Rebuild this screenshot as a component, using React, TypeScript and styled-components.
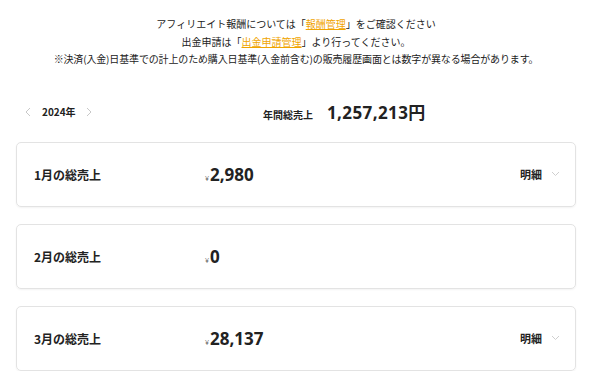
import React from 'react';
import styled, { createGlobalStyle } from 'styled-components';

const GlobalStyle = createGlobalStyle`
  html, body {
    margin: 0;
    padding: 0;
    background: #ffffff;
  }
  body {
    font-family: "Open Sans", "Noto Sans CJK JP", sans-serif;
    color: #222222;
  }
`;

const Page = styled.div`
  width: 592px;
  padding: 15px 16px 0;
  box-sizing: border-box;
`;

const Notice = styled.div`
  text-align: center;
  font-size: 10px;
  line-height: 17.5px;
  color: #222;
  font-family: "Noto Sans CJK JP", sans-serif;
`;

const NoticeLink = styled.span`
  color: #f0a400;
  text-decoration: underline;
`;

const Small = styled.div`
  font-size: 10px;
  letter-spacing: -0.15px;
`;

const YearBar = styled.div`
  display: flex;
  align-items: center;
  height: 26px;
  margin-top: 31px;
  margin-bottom: 17px;
`;

const YearNav = styled.div`
  display: flex;
  align-items: center;
  gap: 10px;
  padding-left: 9px;
  width: 230px;
`;

const Arrow = styled.svg`
  width: 6px;
  height: 10px;
  stroke: #c8c8c8;
  fill: none;
  stroke-width: 1;
`;

const YearLabel = styled.span`
  font-size: 10px;
  font-weight: 700;
  font-family: "Noto Sans CJK JP", sans-serif;
  margin-left: 1px;
`;

const Total = styled.div`
  display: flex;
  align-items: baseline;
  gap: 14px;
  margin-left: 8px;
`;

const TotalLabel = styled.span`
  font-size: 10px;
  font-weight: 700;
  font-family: "Noto Sans CJK JP", sans-serif;
`;

const TotalValue = styled.span`
  font-size: 17px;
  font-weight: 700;
  letter-spacing: 0.4px;
`;

const List = styled.div`
  display: flex;
  flex-direction: column;
  gap: 17px;
`;

const Card = styled.div`
  display: grid;
  grid-template-columns: 171px 1fr auto;
  align-items: center;
  height: 65px;
  box-sizing: border-box;
  padding: 0 16px 0 17px;
  border: 1px solid #e3e3e3;
  border-radius: 5px;
  box-shadow: 0 1px 2px rgba(0, 0, 0, 0.05);
`;

const Month = styled.span`
  font-size: 12px;
  font-weight: 700;
  font-family: "Noto Sans CJK JP", sans-serif;
`;

const Amount = styled.span`
  display: flex;
  align-items: baseline;
  font-size: 17px;
  font-weight: 700;
`;

const Yen = styled.span`
  font-size: 7px;
  font-weight: 400;
  color: #555;
  margin-right: 1px;
`;

const Detail = styled.button<{ $hidden?: boolean }>`
  display: flex;
  align-items: center;
  gap: 9px;
  border: none;
  background: none;
  padding: 0;
  margin-right: -1px;
  font-family: "Noto Sans CJK JP", sans-serif;
  font-size: 11px;
  font-weight: 700;
  color: #222;
  visibility: ${p => (p.$hidden ? 'hidden' : 'visible')};
`;

const Chevron = styled.svg`
  width: 9px;
  height: 6px;
  stroke: #cfcfcf;
  fill: none;
  stroke-width: 1;
`;

const rows = [
  { month: 1, amount: '2,980', detail: true },
  { month: 2, amount: '0', detail: false },
  { month: 3, amount: '28,137', detail: true },
];

const App: React.FC = () => {
  return (
    <>
      <GlobalStyle />
      <Page>
        <Notice>
          <div>
            アフィリエイト報酬については「<NoticeLink>報酬管理</NoticeLink>」をご確認ください
          </div>
          <div>
            出金申請は「<NoticeLink>出金申請管理</NoticeLink>」より行ってください。
          </div>
          <Small>
            ※決済(入金)日基準での計上のため購入日基準(入金前含む)の販売履歴画面とは数字が異なる場合があります。
          </Small>
        </Notice>

        <YearBar>
          <YearNav>
            <Arrow viewBox="0 0 6 10">
              <path d="M5 1 L1 5 L5 9" />
            </Arrow>
            <YearLabel>2024年</YearLabel>
            <Arrow viewBox="0 0 6 10">
              <path d="M1 1 L5 5 L1 9" />
            </Arrow>
          </YearNav>
          <Total>
            <TotalLabel>年間総売上</TotalLabel>
            <TotalValue>1,257,213円</TotalValue>
          </Total>
        </YearBar>

        <List>
          {rows.map(r => (
            <Card key={r.month}>
              <Month>{r.month}月の総売上</Month>
              <Amount>
                <Yen>¥</Yen>
                {r.amount}
              </Amount>
              <Detail $hidden={!r.detail}>
                明細
                <Chevron viewBox="0 0 9 6">
                  <path d="M1 1 L4.5 4.5 L8 1" />
                </Chevron>
              </Detail>
            </Card>
          ))}
        </List>
      </Page>
    </>
  );
};

export default App;
